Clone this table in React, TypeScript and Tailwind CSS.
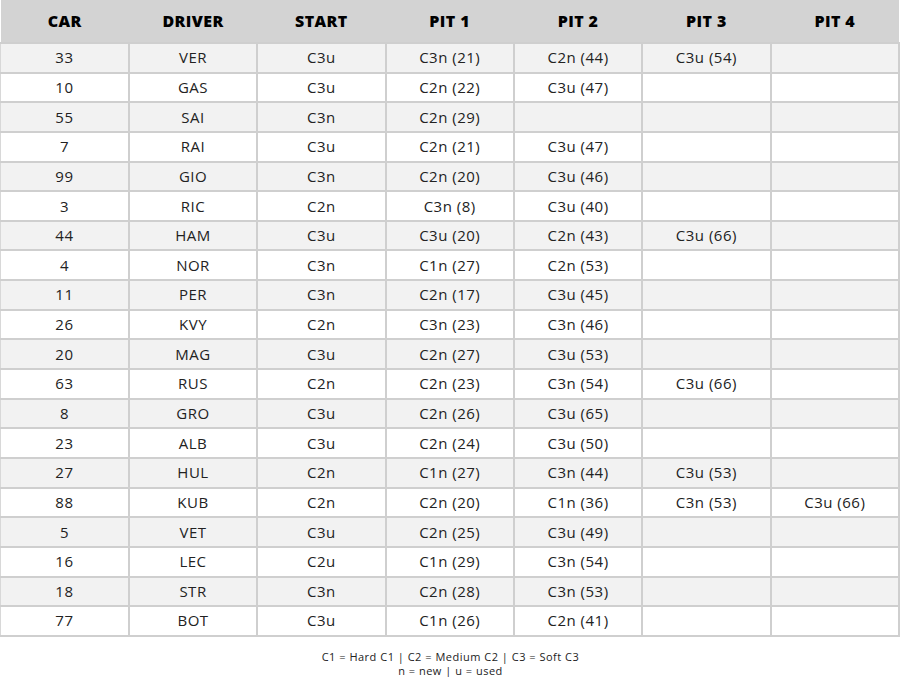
const rows: string[][] = [
  ["33", "VER", "C3u", "C3n (21)", "C2n (44)", "C3u (54)", ""],
  ["10", "GAS", "C3u", "C2n (22)", "C3u (47)", "", ""],
  ["55", "SAI", "C3n", "C2n (29)", "", "", ""],
  ["7", "RAI", "C3u", "C2n (21)", "C3u (47)", "", ""],
  ["99", "GIO", "C3n", "C2n (20)", "C3u (46)", "", ""],
  ["3", "RIC", "C2n", "C3n (8)", "C3u (40)", "", ""],
  ["44", "HAM", "C3u", "C3u (20)", "C2n (43)", "C3u (66)", ""],
  ["4", "NOR", "C3n", "C1n (27)", "C2n (53)", "", ""],
  ["11", "PER", "C3n", "C2n (17)", "C3u (45)", "", ""],
  ["26", "KVY", "C2n", "C3n (23)", "C3n (46)", "", ""],
  ["20", "MAG", "C3u", "C2n (27)", "C3u (53)", "", ""],
  ["63", "RUS", "C2n", "C2n (23)", "C3n (54)", "C3u (66)", ""],
  ["8", "GRO", "C3u", "C2n (26)", "C3u (65)", "", ""],
  ["23", "ALB", "C3u", "C2n (24)", "C3u (50)", "", ""],
  ["27", "HUL", "C2n", "C1n (27)", "C3n (44)", "C3u (53)", ""],
  ["88", "KUB", "C2n", "C2n (20)", "C1n (36)", "C3n (53)", "C3u (66)"],
  ["5", "VET", "C3u", "C2n (25)", "C3u (49)", "", ""],
  ["16", "LEC", "C2u", "C1n (29)", "C3n (54)", "", ""],
  ["18", "STR", "C3n", "C2n (28)", "C3n (53)", "", ""],
  ["77", "BOT", "C3u", "C1n (26)", "C2n (41)", "", ""],
];

const headers = ["CAR", "DRIVER", "START", "PIT 1", "PIT 2", "PIT 3", "PIT 4"];

export default function App() {
  return (
    <div className="w-[901px] bg-white text-[#222] font-['Open_Sans',sans-serif]">
      <table className="w-[900px] table-fixed border-collapse">
        <thead>
          <tr className="h-[43px] bg-[#d3d3d3]">
            {headers.map((h) => (
              <th key={h} className="text-[16px] font-extrabold tracking-[0.4px] text-black text-center">
                {h}
              </th>
            ))}
          </tr>
        </thead>
        <tbody>
          {rows.map((r, i) => (
            <tr key={r[0]} className={`h-[29.65px] ${i % 2 === 0 ? "bg-[#f2f2f2]" : "bg-white"}`}>
              {r.map((c, j) => (
                <td
                  key={j}
                  className="border-2 border-[#cfcfcf] first:border-l first:border-l-[#d8d8d8] text-center text-[15px] tracking-[0.5px] leading-none"
                >
                  {c}
                </td>
              ))}
            </tr>
          ))}
        </tbody>
      </table>
      <div className="pt-[13px] text-center text-[11px] tracking-[0.5px] leading-[14px] text-[#222]">
        <p>C1 = Hard C1 | C2 = Medium C2 | C3 = Soft C3</p>
        <p>n = new | u = used</p>
      </div>
    </div>
  );
}
